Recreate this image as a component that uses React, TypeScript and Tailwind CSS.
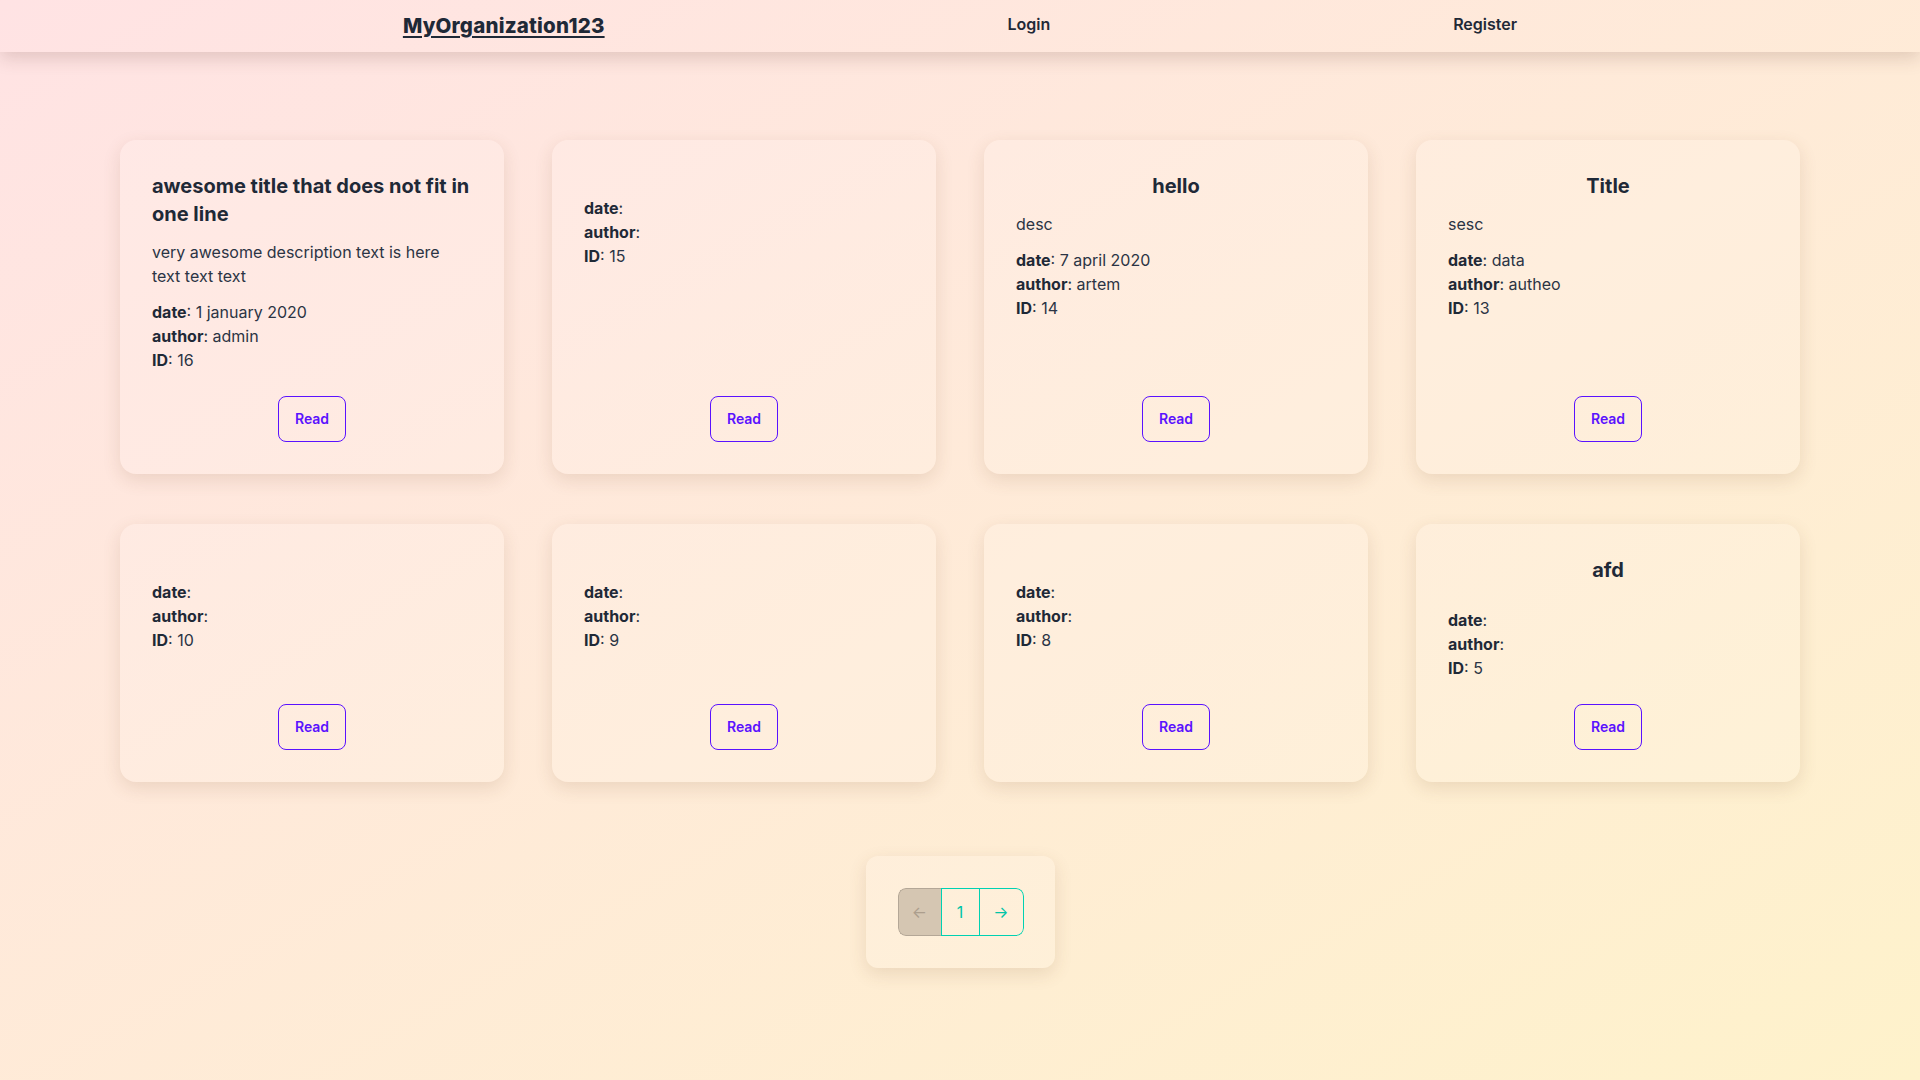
import React from 'react'

type Post = {
  id: number
  title: string
  desc: string
  date: string
  author: string
}

const posts: Post[] = [
  { id: 16, title: 'awesome title that does not fit in one line', desc: 'very awesome description text is here text text text', date: '1 january 2020', author: 'admin' },
  { id: 15, title: '', desc: '', date: '', author: '' },
  { id: 14, title: 'hello', desc: 'desc', date: '7 april 2020', author: 'artem' },
  { id: 13, title: 'Title', desc: 'sesc', date: 'data', author: 'autheo' },
  { id: 10, title: '', desc: '', date: '', author: '' },
  { id: 9, title: '', desc: '', date: '', author: '' },
  { id: 8, title: '', desc: '', date: '', author: '' },
  { id: 5, title: 'afd', desc: '', date: '', author: '' },
]

function PostCard({ post }: { post: Post }) {
  return (
    <div className="flex flex-col gap-3 rounded-2xl bg-white/15 p-8 shadow-[0_6px_18px_rgba(120,80,40,0.14)]">
      <h2 className="self-center text-xl font-bold leading-7 text-[#1f2937]">{post.title}</h2>
      <p className="text-base leading-6 text-[#2b3444]">{post.desc}</p>
      <div className="text-base leading-6 text-[#2b3444]">
        <div>
          <span className="font-bold text-[#1f2937]">date</span>: {post.date}
        </div>
        <div>
          <span className="font-bold text-[#1f2937]">author</span>: {post.author}
        </div>
        <div>
          <span className="font-bold text-[#1f2937]">ID</span>: {post.id}
        </div>
      </div>
      <div className="mt-auto flex justify-center pt-3">
        <button className="rounded-lg border border-[#5a12ff] px-4 py-3 text-sm font-semibold leading-5 text-[#5a12ff]">
          Read
        </button>
      </div>
    </div>
  )
}

export default function App() {
  return (
    <div
      className="min-h-screen bg-linear-to-br from-[#ffe3e4] to-[#fef2cb] text-[#1f2937]"
      style={{ fontFamily: 'Inter, "Noto Sans", sans-serif' }}
    >
      <nav className="flex items-start justify-evenly py-3 shadow-[0_6px_18px_rgba(90,50,40,0.18)]">
        <a className="text-[20.5px] font-extrabold leading-7 tracking-[0.01em] underline underline-offset-[3px]">MyOrganization123</a>
        <a className="text-base font-semibold leading-6">Login</a>
        <a className="text-base font-semibold leading-6">Register</a>
      </nav>

      <main className="px-[120px] pt-[88px] pb-[112px]">
        <div className="grid grid-cols-4 gap-x-12 gap-y-[50px]">
          {posts.map((p) => (
            <PostCard key={p.id} post={p} />
          ))}
        </div>

        <div className="mt-[74px] flex justify-center">
          <div className="rounded-xl bg-white/15 p-8 pr-[31px] shadow-[0_6px_18px_rgba(120,80,40,0.14)]">
            <div className="flex h-12 overflow-hidden rounded-lg">
              <button className="flex w-[43px] items-center justify-center rounded-l-lg border border-r-0 border-[#b4a797] bg-[#d5c6b2] text-base text-[#ac9e8d]">
                ←
              </button>
              <button className="flex w-[39px] items-center justify-center border border-[#00d1b2] text-base text-[#00c4a7]">
                1
              </button>
              <button className="flex w-[44px] items-center justify-center rounded-r-lg border border-l-0 border-[#00d1b2] text-base text-[#00c4a7]">
                →
              </button>
            </div>
          </div>
        </div>
      </main>
    </div>
  )
}
